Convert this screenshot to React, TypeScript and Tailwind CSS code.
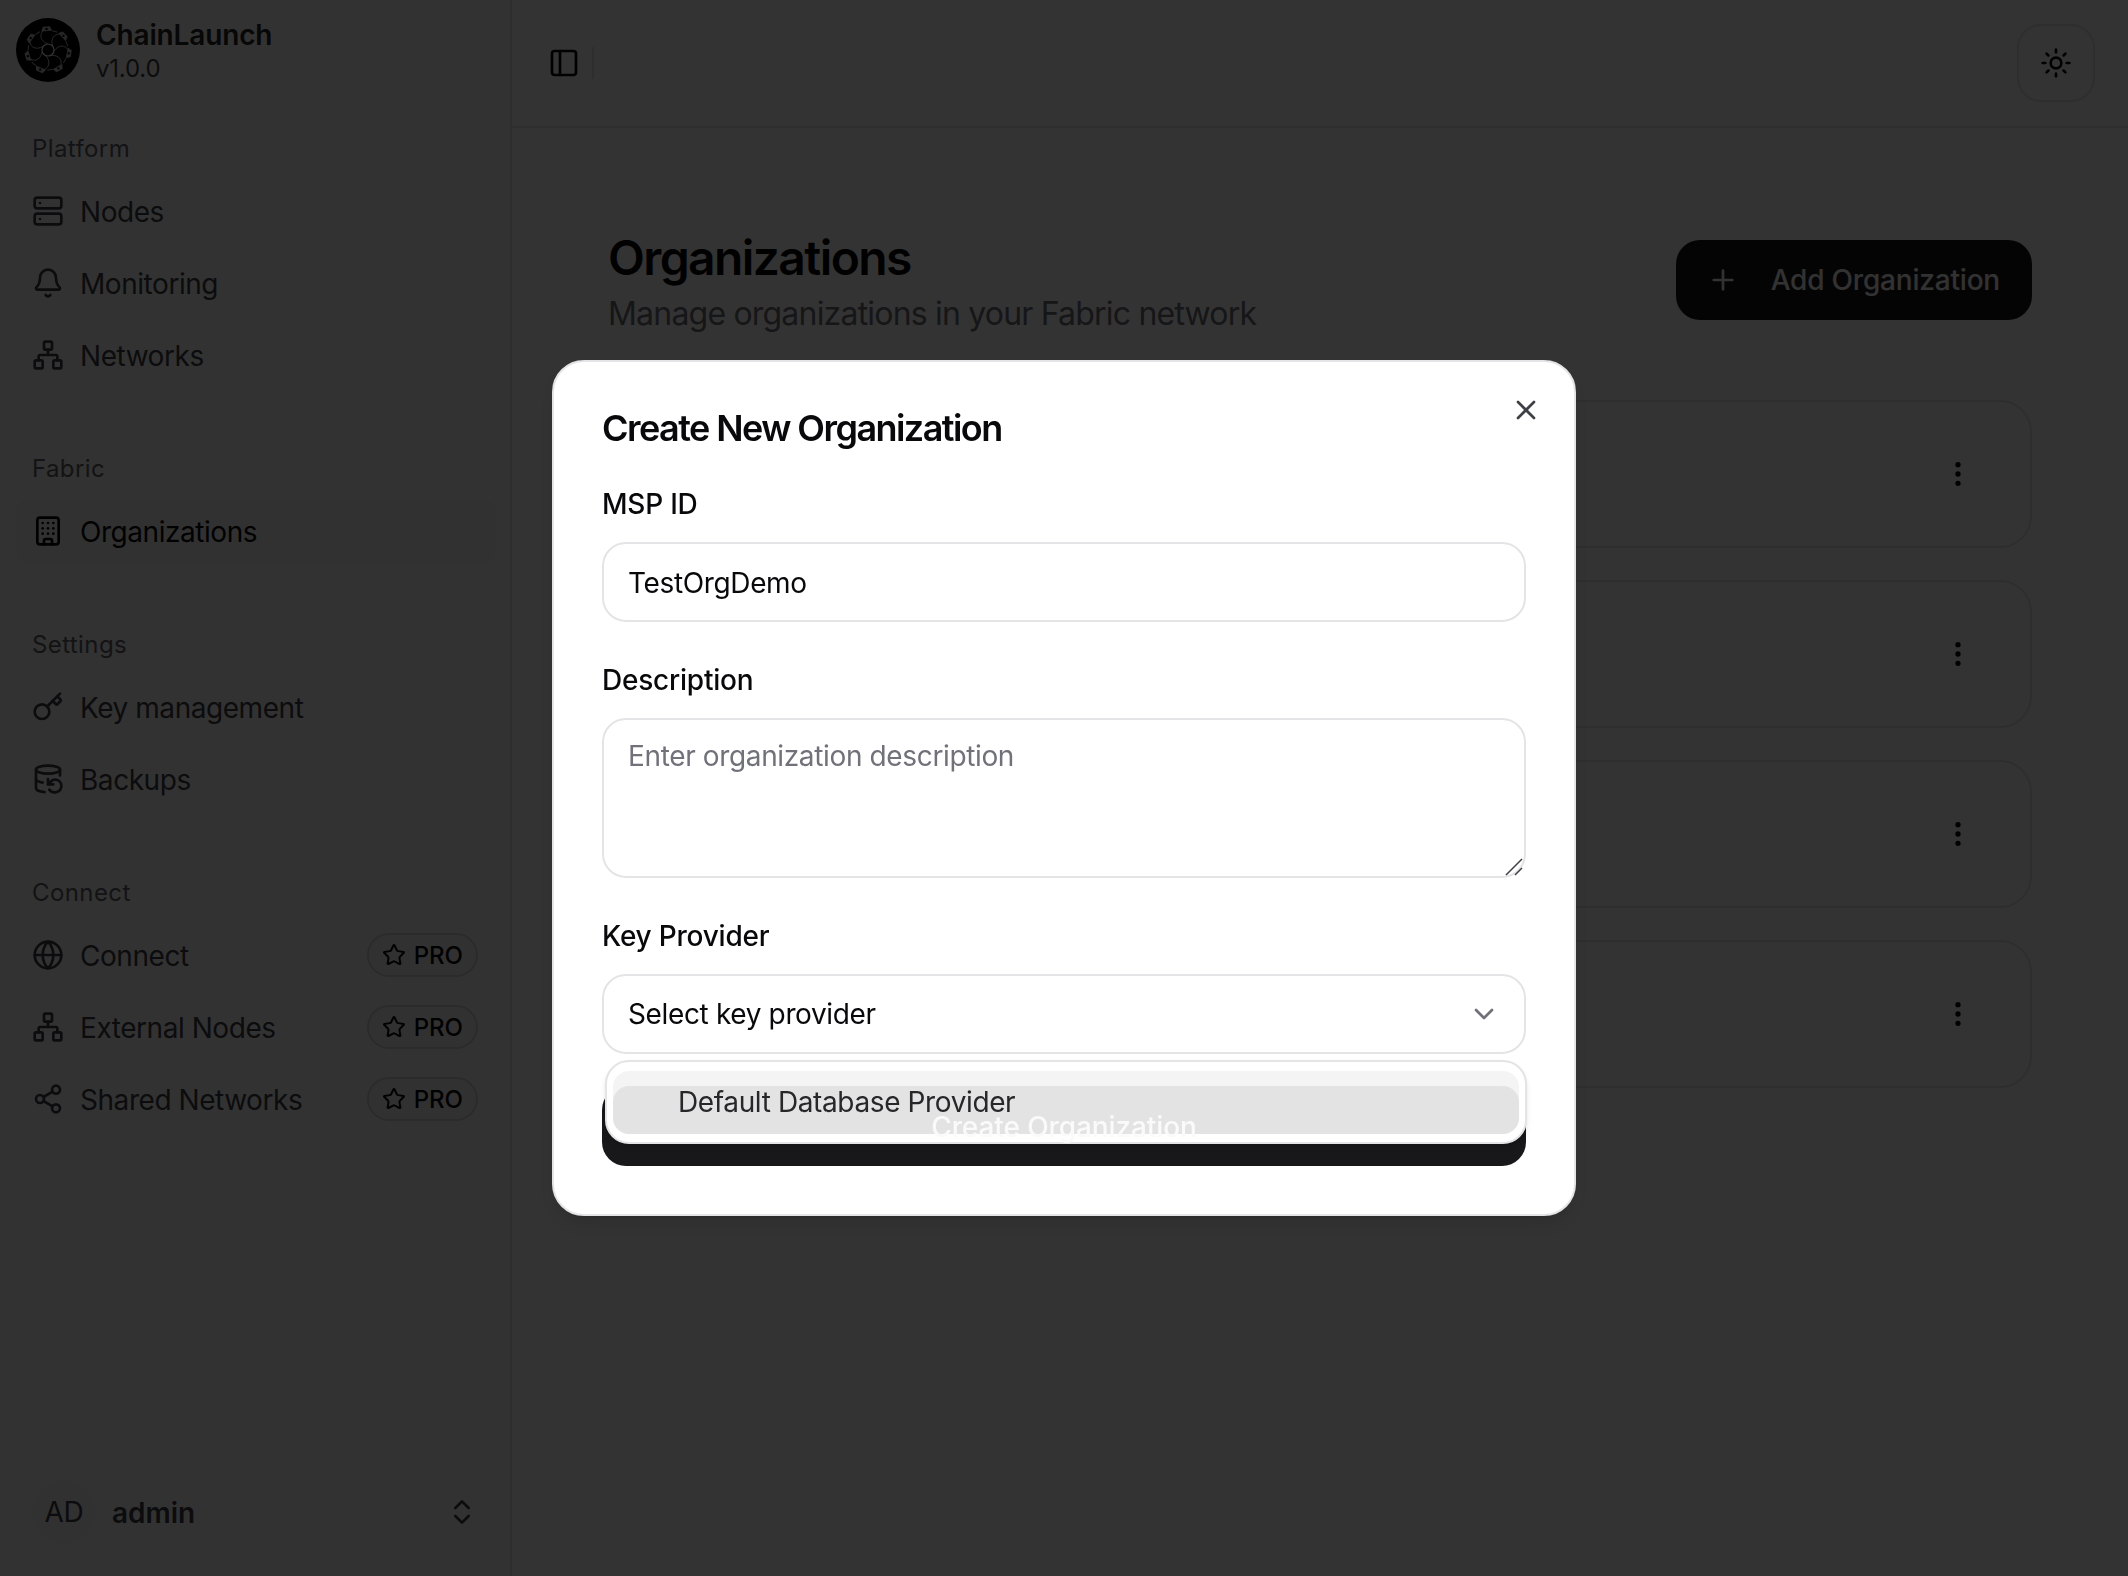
import {
  Bell,
  Building,
  ChevronDown,
  ChevronsUpDown,
  DatabaseBackup,
  EllipsisVertical,
  Globe,
  Key,
  Network,
  PanelLeft,
  Plus,
  Server,
  Share2,
  Star,
  Sun,
  X,
} from "lucide-react";
import React from "react";

type NavItem = {
  label: string;
  icon: React.ElementType;
  active?: boolean;
  pro?: boolean;
};

const groups: { title: string; items: NavItem[] }[] = [
  {
    title: "Platform",
    items: [
      { label: "Nodes", icon: Server },
      { label: "Monitoring", icon: Bell },
      { label: "Networks", icon: Network },
    ],
  },
  {
    title: "Fabric",
    items: [{ label: "Organizations", icon: Building, active: true }],
  },
  {
    title: "Settings",
    items: [
      { label: "Key management", icon: Key },
      { label: "Backups", icon: DatabaseBackup },
    ],
  },
  {
    title: "Connect",
    items: [
      { label: "Connect", icon: Globe, pro: true },
      { label: "External Nodes", icon: Network, pro: true },
      { label: "Shared Networks", icon: Share2, pro: true },
    ],
  },
];

function Logo() {
  const angles = [0, 51.4, 102.8, 154.3, 205.7, 257.1, 308.6];

  return (
    <svg viewBox="0 0 64 64" className="w-16 h-16 shrink-0">
      <circle cx="32" cy="32" r="32" fill="#000" />
      <circle cx="32" cy="32" r="6" fill="none" stroke="#fff" strokeWidth="1.2" />
      {angles.map((a) => (
        <g key={a} transform={`rotate(${a - 4} 32 32)`} fill="none">
          <path d="M26.5 13 L28.5 8.5 L35.5 8.5 L37.5 13 Z" fill="#fff" fillOpacity="0.75" />
          <circle cx="32" cy="11" r="1.2" fill="#000" />
          <path d="M37.5 13 C39.5 13.5 41 14 42.5 15" stroke="#fff" strokeWidth="1" strokeOpacity="0.7" />
          <path d="M32 26 C25 22 24.5 16.5 28 13" stroke="#fff" strokeWidth="0.7" />
        </g>
      ))}
    </svg>
  );
}

function Sidebar() {
  return (
    <aside className="w-[512px] shrink-0 h-full flex flex-col bg-[#fafafa] border-r-2 border-[#e4e4e7]">
      <div className="h-[115px] flex items-start gap-4 pl-4 pt-[18px]">
        <Logo />
        <div className="-mt-px">
          <div className="text-[28px] leading-[36px] font-semibold tracking-[-0.15px] text-[#27272a]">ChainLaunch</div>
          <div className="text-[24px] leading-[32px] tracking-[-0.2px] text-[#3f3f46]">v1.0.0</div>
        </div>
      </div>

      <nav className="flex flex-col gap-12">
        {groups.map((group) => (
          <div key={group.title} className="flex flex-col">
            <div className="h-16 flex items-center pl-8 pt-[3px] text-[24px] tracking-[0.4px] text-[#5f5f68]">
              {group.title}
            </div>
            <div className="flex flex-col gap-2">
              {group.items.map((item) => (
                <div
                  key={item.label}
                  className={`h-16 mx-4 w-[480px] flex items-center gap-4 px-4 rounded-xl text-[28px] tracking-[-0.45px] ${
                    item.active ? "bg-[#f4f4f5] text-[#09090b]" : "text-[#3f3f46]"
                  }`}
                >
                  <item.icon className="w-8 h-8 shrink-0" />
                  <span className="pt-[2px]">{item.label}</span>
                  {item.pro && (
                    <span className="ml-auto h-11 flex items-center gap-2 px-[13px] mr-0.5 rounded-full border-2 border-[#d4d4d8] bg-[#f4f4f5] text-[24px] tracking-normal font-medium text-[#09090b]">
                      <Star className="w-6 h-6" />
                      <span className="pt-px">PRO</span>
                    </span>
                  )}
                </div>
              ))}
            </div>
          </div>
        ))}
      </nav>

      <div className="mt-auto mb-8 mx-8 h-16 flex items-center gap-4 text-[#3f3f46]">
        <div className="w-16 h-16 rounded-full bg-[#f4f4f5] flex items-center justify-center text-[28px] tracking-[-0.2px]">
          AD
        </div>
        <span className="pt-[2px] text-[28px] font-semibold">admin</span>
        <ChevronsUpDown className="w-8 h-8 ml-auto" />
      </div>
    </aside>
  );
}

function MainPage() {
  return (
    <main className="flex-1 h-full flex flex-col bg-white">
      <header className="h-[128px] shrink-0 flex items-center justify-between border-b-2 border-[#e4e4e7] pl-9 pr-[33px]">
        <div className="flex items-center gap-3">
          <PanelLeft className="w-8 h-8 text-[#09090b]" />
          <div className="w-0.5 h-8 bg-[#e4e4e7]" />
        </div>
        <div className="w-[78px] h-[78px] flex items-center justify-center rounded-3xl border-2 border-[#e4e4e7]">
          <Sun className="w-8 h-8 text-[#09090b]" />
        </div>
      </header>

      <div className="px-24 pt-[99px]">
        <div className="flex items-start justify-between">
          <div>
            <h1 className="pt-px text-[48px] leading-[60px] font-semibold tracking-[-1.6px] text-[#09090b]">Organizations</h1>
            <p className="mt-0.5 text-[32px] leading-[48px] tracking-[-0.8px] text-[#71717a]">
              Manage organizations in your Fabric network
            </p>
          </div>
          <div className="mt-[13px] h-20 flex items-center gap-8 pl-[31px] pr-8 rounded-3xl bg-[#18181b] text-[28px] tracking-[-0.2px] font-medium text-[#fafafa]">
            <Plus className="w-8 h-8" />
            Add Organization
          </div>
        </div>

        <div className="-mt-px">
          <div className="mt-[63px] flex flex-col gap-8">
            {[1, 2, 3, 4].map((n) => (
              <div
                key={n}
                className="h-[148px] flex items-center justify-end pr-[56px] rounded-[32px] border-2 border-[#e4e4e7]"
              >
                <EllipsisVertical className="w-8 h-8 text-[#09090b]" />
              </div>
            ))}
          </div>
        </div>
      </div>
    </main>
  );
}

function CreateDialog() {
  const fieldClass =
    "w-full px-6 rounded-3xl border-2 border-[#e4e4e7] bg-white text-[28px] tracking-[-0.36px] text-[#09090b] outline-none placeholder:text-[#71717a]";
  const labelClass = "block mt-11 text-[28px] leading-7 tracking-[-0.22px] font-medium text-[#09090b]";

  return (
    <div className="fixed inset-0 flex items-center justify-center">
      <div className="relative w-[1024px] h-[856px] p-12 border-2 border-[#e4e4e7] rounded-[32px] bg-white shadow-lg">
        <X className="absolute top-[32px] right-[32px] w-8 h-8 text-[#3f3f46]" />

        <h2 className="text-[36px] leading-9 font-semibold tracking-[-1.55px] text-[#09090b]">Create New Organization</h2>

        <label className={labelClass}>MSP ID</label>
        <input readOnly value="TestOrgDemo" className={`${fieldClass} mt-6 h-20 pt-[2px]`} />

        <label className={labelClass}>Description</label>
        <div className="relative mt-6 h-40">
          <textarea
            readOnly
            placeholder="Enter organization description"
            className={`${fieldClass} h-40 py-4 leading-[40px] block resize-none`}
          />
          <svg viewBox="0 0 18 18" className="absolute right-[3px] bottom-[2px] w-[18px] h-[18px]">
            <path d="M1 17 L17 1 M10 17 L17 10" stroke="#3f3f46" strokeWidth="1.5" fill="none" />
          </svg>
        </div>

        <label className={labelClass}>Key Provider</label>
        <div className="relative mt-6">
          <div className="h-20 flex items-center justify-between pl-6 pr-6 rounded-3xl border-2 border-[#e4e4e7] text-[28px] tracking-[-0.36px] text-[#09090b]">
            Select key provider
            <ChevronDown className="w-8 h-8 text-[#71717a]" />
          </div>

          <div className="absolute z-10 top-[86px] left-[3px] -right-[1px] h-[84px] px-[6px] pt-[9px] rounded-3xl border-2 border-[#e4e4e7] bg-white shadow-md">
            <div className="relative h-[63px] rounded-2xl bg-[#f4f4f5]">
              <div className="absolute inset-x-0 bottom-0 h-12 rounded-2xl bg-[#e3e3e3]" />
              <span className="relative block pl-[65px] pt-[11px] text-[28px] leading-[40px] tracking-[-0.38px] text-[#27272a]">
                Default Database Provider
              </span>
            </div>
          </div>
        </div>

        <div className="mt-8 h-20 flex items-center justify-center rounded-3xl bg-[#18181b] text-[28px] tracking-[-0.1px] font-medium text-[#fafafa]">
          <span className="relative z-20 pt-[2px]">Create Organization</span>
        </div>
      </div>
    </div>
  );
}

export default function App() {
  return (
    <div className="relative h-screen w-full overflow-hidden flex font-['Inter',sans-serif]">
      <Sidebar />
      <MainPage />
      <div className="absolute inset-0 bg-black/80" />
      <CreateDialog />
    </div>
  );
}
